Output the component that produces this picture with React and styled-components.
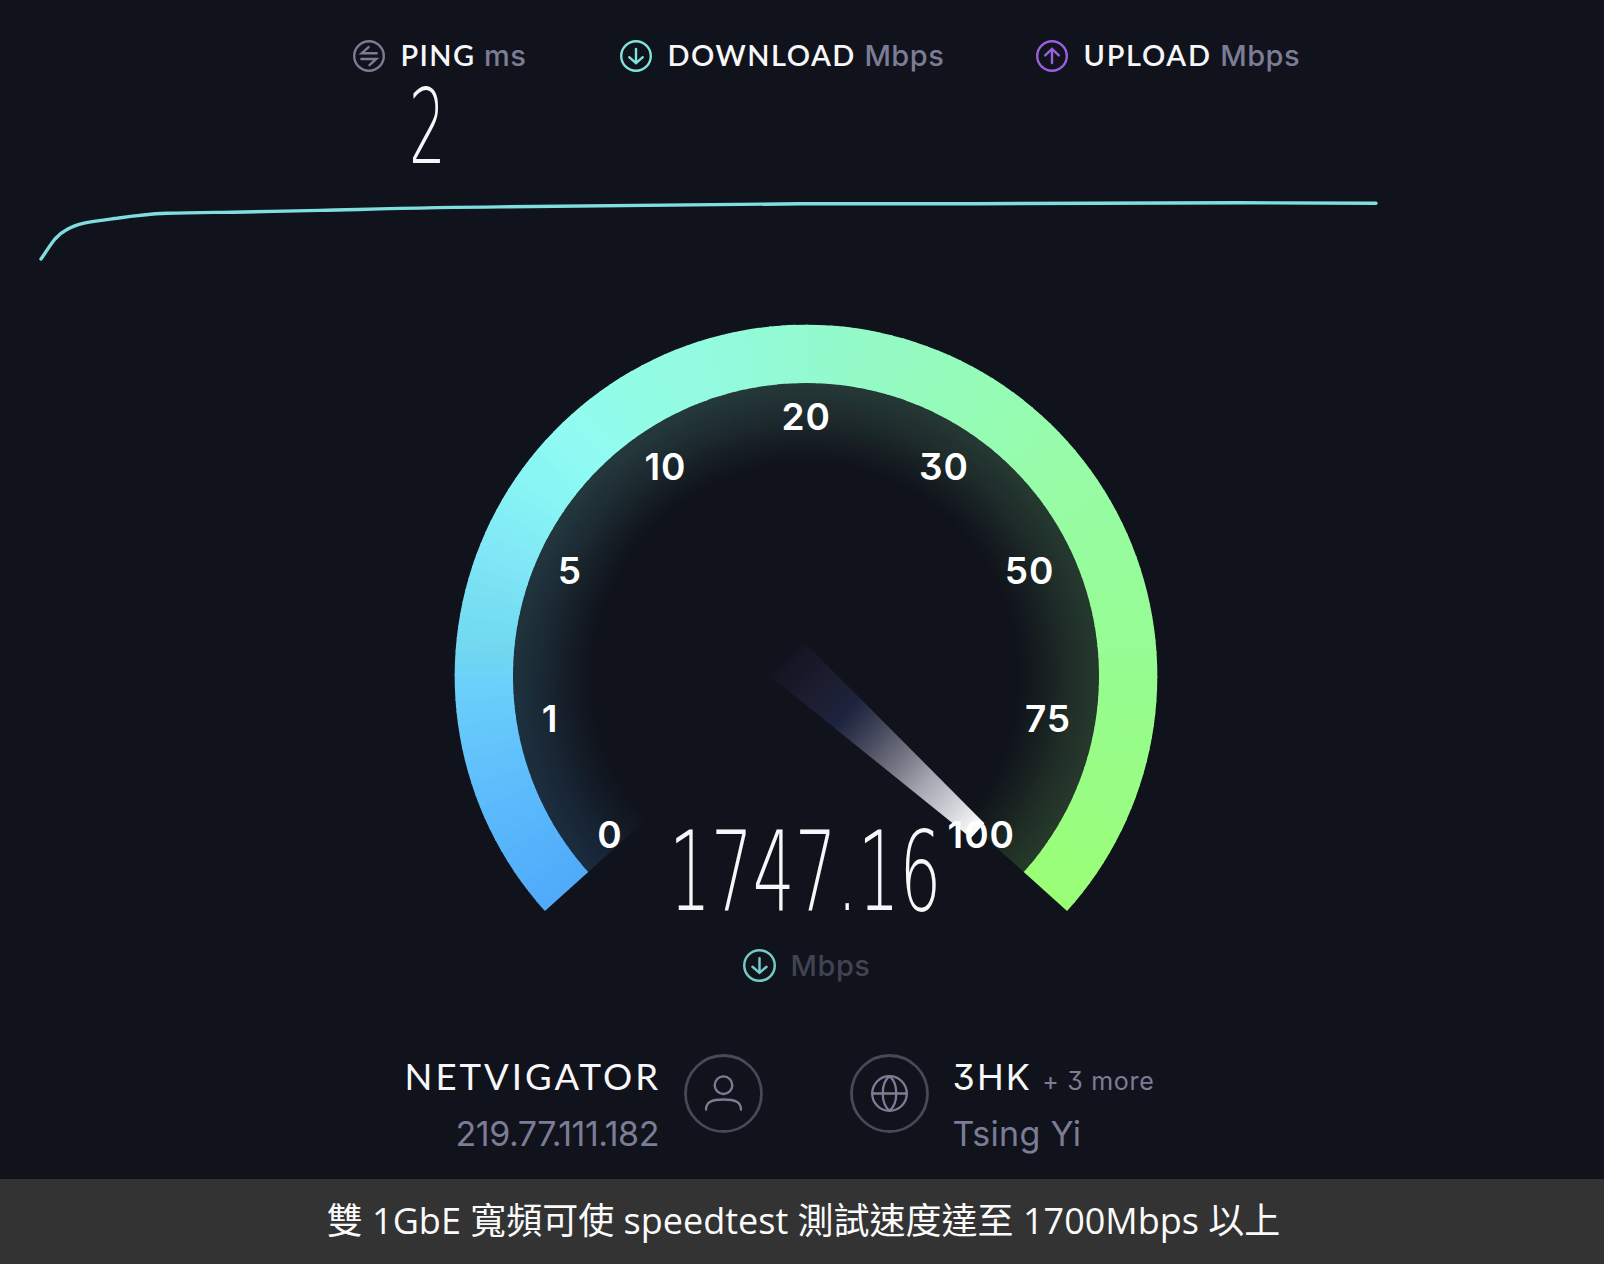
import React from "react";
import styled, { createGlobalStyle } from "styled-components";

const GlobalStyle = createGlobalStyle`
  * {
    box-sizing: border-box;
  }
  body {
    margin: 0;
    background: #10131b;
  }
`;

const CENTER = 356;
const OUTER = 351.3;
const INNER = 293;
const SWEEP = 264;

const stops = [
  [0, [79, 170, 250]],
  [20, [92, 187, 251]],
  [41, [107, 208, 250]],
  [47, [113, 216, 240]],
  [62, [126, 230, 245]],
  [76, [136, 244, 245]],
  [88, [144, 252, 242]],
  [100, [146, 252, 230]],
  [120, [147, 250, 219]],
  [132, [147, 250, 208]],
  [150, [148, 250, 192]],
  [170, [149, 252, 178]],
  [190, [151, 252, 162]],
  [222, [150, 252, 144]],
  [264, [154, 254, 118]],
];

const colorAt = (deg) => {
  let i = 1;
  while (i < stops.length - 1 && stops[i][0] < deg) i++;
  const [d0, c0] = stops[i - 1];
  const [d1, c1] = stops[i];
  const t = (deg - d0) / (d1 - d0);
  return `rgb(${c0.map((c, k) => Math.round(c + (c1[k] - c) * t)).join(",")})`;
};

// 0 is the start of the scale (lower left), angles grow clockwise
const point = (deg, r) => {
  const a = ((deg + 138) * Math.PI) / 180;
  return `${(CENTER + r * Math.cos(a)).toFixed(2)} ${(CENTER + r * Math.sin(a)).toFixed(2)}`;
};

const wedge = (from, to, r1, r2) =>
  `M${point(from, r1)}A${r1} ${r1} 0 0 1 ${point(to, r1)}L${point(to, r2)}A${r2} ${r2} 0 0 0 ${point(from, r2)}Z`;

const slices = Array.from({ length: SWEEP / 2 }, (_, i) => ({
  from: i * 2,
  to: Math.min(i * 2 + 2.3, SWEEP),
  color: colorAt(i * 2 + 1),
}));

const marks = [
  { label: "0", x: 160, y: 528 },
  { label: "1", x: 100, y: 411.5 },
  { label: "5", x: 120, y: 263.5 },
  { label: "10", x: 215.5, y: 159.5 },
  { label: "20", x: 356.3, y: 109.5 },
  { label: "30", x: 494, y: 159.5 },
  { label: "50", x: 579.5, y: 263.5 },
  { label: "75", x: 598, y: 411.5 },
  { label: "100", x: 531.3, y: 528 },
];

function ArrowIcon({ type, size = 32, color }) {
  return (
    <svg width={size} height={size} viewBox="-16 -16 32 32" fill="none" stroke={color} strokeWidth="2.4" strokeLinecap="round">
      <circle r="14.8" />
      {type === "ping" && <path d="M7.6 -2.8H-7.3L-0.4 -8.9M-7.6 3H7.3L0.5 9.2" />}
      {type === "down" && <path d="M0 -7V6.8M-6.8 1.2L0 7.2L6.8 1.2" />}
      {type === "up" && <path d="M0 7V-6.8M-6.8 -0.6L0 -7L6.8 -0.6" />}
    </svg>
  );
}

function Gauge() {
  return (
    <svg width="712" height="600" viewBox="0 0 712 600">
      <defs>
        <radialGradient id="fade" gradientUnits="userSpaceOnUse" cx={CENTER} cy={CENTER} r={INNER}>
          <stop offset="0.72" stopColor="#fff" stopOpacity="0" />
          <stop offset="0.8" stopColor="#fff" stopOpacity="0.045" />
          <stop offset="0.9" stopColor="#fff" stopOpacity="0.115" />
          <stop offset="1" stopColor="#fff" stopOpacity="0.165" />
        </radialGradient>
        <mask id="glow" maskUnits="userSpaceOnUse" x="0" y="0" width="712" height="600">
          <circle cx={CENTER} cy={CENTER} r={INNER + 1} fill="url(#fade)" />
        </mask>
        <linearGradient id="needle" gradientUnits="userSpaceOnUse" x1="-26" y1="0" x2="231" y2="0">
          <stop offset="0" stopColor="#2a2a5a" stopOpacity="0.08" />
          <stop offset="0.16" stopColor="#2f2c4c" stopOpacity="0.38" />
          <stop offset="0.31" stopColor="#2c3766" stopOpacity="0.45" />
          <stop offset="0.52" stopColor="#8a8ca0" stopOpacity="0.62" />
          <stop offset="0.72" stopColor="#c0c0cc" stopOpacity="0.84" />
          <stop offset="0.9" stopColor="#e6e6ec" stopOpacity="0.95" />
          <stop offset="1" stopColor="#fff" />
        </linearGradient>
      </defs>
      <g mask="url(#glow)">
        {slices.map((s) => (
          <path key={s.from} d={wedge(s.from, s.to, INNER + 1, 200)} fill={s.color} />
        ))}
      </g>
      {slices.map((s) => (
        <path key={s.from} d={wedge(s.from, s.to, OUTER, INNER)} fill={s.color} />
      ))}
      <path d="M-26 -24L231 -10V10L-26 24Z" fill="url(#needle)" transform={`translate(${CENTER} ${CENTER}) rotate(42)`} />
      {marks.map((m) => (
        <Mark key={m.label} x={m.x} y={m.y}>
          {m.label}
        </Mark>
      ))}
    </svg>
  );
}

export default function App() {
  return (
    <Page>
      <GlobalStyle />
      <Header>
        <Stat>
          <StatHead>
            <ArrowIcon type="ping" color="#7d7a96" />
            <Label>
              <Title $spacing={1.4}>PING</Title>
              <Unit>ms</Unit>
            </Label>
          </StatHead>
          <Ping>2</Ping>
        </Stat>
        <Stat>
          <StatHead>
            <ArrowIcon type="down" color="#7fe3dd" />
            <Label>
              <Title $spacing={1.5}>DOWNLOAD</Title>
              <Unit>Mbps</Unit>
            </Label>
          </StatHead>
        </Stat>
        <Stat>
          <StatHead>
            <ArrowIcon type="up" color="#9a5fe0" />
            <Label>
              <Title $spacing={1.7}>UPLOAD</Title>
              <Unit>Mbps</Unit>
            </Label>
          </StatHead>
        </Stat>
      </Header>

      <Chart viewBox="0 0 1604 100">
        <path
          d="M41 79C46 72 50 65 55 59C59 54.5 62 52 67 49.5C72 46.5 77 44.8 83 43.3C93 41 105 39.8 117 38.3C135 35.6 148 34 167 33.3C190 32.5 210 32.5 233 32.2C265 31.7 290 30.8 320 30.4C380 29 430 27.4 500 26.9C600 25.4 700 24.5 800 23.8C880 23.3 930 24 975 23.7C1080 22.6 1170 23.4 1240 22.7C1290 23 1340 23.5 1376 23.3"
          fill="none"
          stroke="#7fdfe0"
          strokeWidth="3.4"
          strokeLinecap="round"
          strokeLinejoin="round"
        />
      </Chart>

      <Dial>
        <Gauge />
        <Reading>
          <Speed>1747.16</Speed>
        </Reading>
      </Dial>

      <UnitRow>
        <ArrowIcon type="down" size={33} color="#74cbc5" />
        <Unit $dim>Mbps</Unit>
      </UnitRow>

      <Hosts>
        <Client>
          <Info $end>
            <Provider>NETVIGATOR</Provider>
            <Detail $spacing={-0.45}>219.77.111.182</Detail>
          </Info>
          <Badge viewBox="-39.5 -39.5 79 79">
            <circle r="38" stroke="#474858" strokeWidth="2.8" />
            <circle cy="-8.3" r="8.8" />
            <path d="M-17.5 16.2C-17.5 8.5 -12 6 0 6S17.5 8.5 17.5 16.2" />
          </Badge>
        </Client>
        <Server>
          <Badge viewBox="-39.5 -39.5 79 79">
            <circle r="38" stroke="#474858" strokeWidth="2.8" />
            <circle r="17.3" />
            <path d="M-17.3 0H17.3M0 -17.3C-9 -10 -9 10 0 17.3C9 10 9 -10 0 -17.3" />
          </Badge>
          <Info>
            <ServerName>
              3HK <More>+ 3 more</More>
            </ServerName>
            <Detail $spacing={0.3}>Tsing Yi</Detail>
          </Info>
        </Server>
      </Hosts>

      <Caption>雙 1GbE 寬頻可使 speedtest 測試速度達至 1700Mbps 以上</Caption>
    </Page>
  );
}

const Page = styled.div`
  display: flex;
  flex-direction: column;
  width: 1604px;
  height: 1264px;
  background: #10131b;
  overflow: hidden;
  font-family: Inter, "Liberation Sans", sans-serif;
  font-feature-settings: "cv09";
  color: #f7f7f9;
  svg {
    flex: none;
    display: block;
  }
`;

const Header = styled.header`
  display: grid;
  grid-template-columns: 267px 416px auto;
  height: 180px;
  padding: 40px 0 0 353px;
`;

const Stat = styled.div`
  display: flex;
  flex-direction: column;
`;

const StatHead = styled.div`
  display: flex;
  align-items: flex-start;
  gap: 15.5px;
  height: 32px;
`;

const Label = styled.div`
  display: flex;
  align-items: baseline;
  gap: 8.5px;
  line-height: 30px;
`;

const Title = styled.span`
  font-family: Lato, sans-serif;
  font-size: 29px;
  font-weight: 600;
  letter-spacing: ${(p) => p.$spacing}px;
`;

const Unit = styled.span`
  font-size: 29px;
  font-weight: 500;
  letter-spacing: 0.5px;
  color: ${(p) => (p.$dim ? "#414252" : "#7d7c96")};
`;

const Ping = styled.span`
  width: 36px;
  margin: 3px 0 0 56px;
  font: 200 103px/104px "DejaVu Sans", sans-serif;
  transform: scaleX(0.56);
  transform-origin: left;
`;

const Chart = styled.svg`
  width: 1604px;
  height: 100px;
`;

const Dial = styled.div`
  position: relative;
  display: flex;
  justify-content: center;
  height: 600px;
  margin-top: 40px;
  padding-left: 8.6px;
`;

const Mark = styled.text`
  font-size: 37px;
  font-weight: 620;
  letter-spacing: 1px;
  text-anchor: middle;
  fill: #fff;
`;

const Reading = styled.div`
  position: absolute;
  top: 496px;
  left: 669px;
  width: 272px;
`;

const Speed = styled.span`
  display: block;
  font: 200 110px/113px "DejaVu Sans", sans-serif;
  transform: scaleX(0.599);
  transform-origin: left;
`;

const UnitRow = styled.div`
  display: flex;
  justify-content: center;
  gap: 15px;
  height: 34px;
  margin-top: 29px;
  padding-left: 9px;
  line-height: 33px;
`;

const Hosts = styled.div`
  display: flex;
  gap: 87px;
  height: 125px;
  margin-top: 71px;
`;

const Client = styled.div`
  display: flex;
  justify-content: flex-end;
  gap: 25px;
  width: 763px;
`;

const Server = styled.div`
  display: flex;
  gap: 24px;
  margin-left: -0.5px;
`;

const Info = styled.div`
  display: flex;
  flex-direction: column;
  align-items: ${(p) => (p.$end ? "flex-end" : "flex-start")};
  gap: 16px;
  padding-top: 1px;
`;

const Provider = styled.div`
  margin-right: -2px;
  font: 400 36.5px/43px Lato, sans-serif;
  letter-spacing: 3px;
`;

const ServerName = styled.div`
  height: 43px;
  font-size: 36px;
  line-height: 45px;
  letter-spacing: 2.1px;
`;

const More = styled.span`
  margin-left: -2px;
  font-size: 25px;
  line-height: 1;
  letter-spacing: 0.7px;
  color: #7d7c96;
`;

const Detail = styled.div`
  font-size: 34px;
  line-height: 40px;
  letter-spacing: ${(p) => p.$spacing}px;
  color: #7d7c96;
`;

const Badge = styled.svg`
  width: 79px;
  height: 79px;
  fill: none;
  stroke: #7d7c96;
  stroke-width: 2.3;
  stroke-linecap: round;
`;

const Caption = styled.footer`
  height: 85px;
  padding-left: 3px;
  background: #333;
  color: #fafafa;
  font: 400 36px/83px "Open Sans", "Noto Sans CJK TC", sans-serif;
  text-align: center;
  white-space: nowrap;
`;
